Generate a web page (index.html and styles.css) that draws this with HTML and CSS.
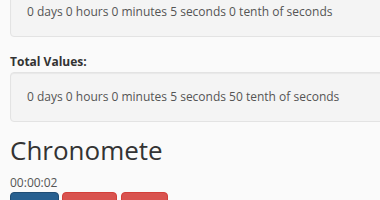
FILE: index.html
```html
<html>
<head>
<link rel="stylesheet" href="styles.css">
</head>
<body>
<div class="page">
<div class="well">0 days 0 hours 0 minutes 5 seconds 0 tenth of seconds</div>
<label class="label">Total Values:</label>
<div class="well">0 days 0 hours 0 minutes 5 seconds 50 tenth of seconds</div>
<h3 class="title">Chronomete</h3>
<div class="time">00:00:02</div>
<div class="buttons">
<button class="btn btn-start" title="Start"></button>
<button class="btn btn-stop" title="Stop"></button>
<button class="btn btn-reset" title="Reset"></button>
</div>
</div>
</body>
</html>
```

FILE: styles.css
```css
body {
  margin: 0;
  background-color: #fafafa;
  font-family: "Open Sans", Arial, sans-serif;
  font-size: 12px;
  color: #333;
  overflow: hidden;
}

.page {
  width: 420px;
  margin-top: -13px;
  padding-left: 10px;
}

.well {
  box-sizing: border-box;
  height: 50px;
  padding: 15px 16px;
  line-height: 18px;
  background-color: #f4f4f4;
  border: 1px solid #e3e3e3;
  border-radius: 4px;
  box-shadow: inset 0 1px 1px rgba(0, 0, 0, 0.05);
  color: #555;
}

.label {
  display: block;
  margin-top: 16px;
  margin-bottom: 2px;
  font-size: 12px;
  line-height: 17px;
  font-weight: bold;
  color: #333;
}

.title {
  margin: 15px 0 0 0;
  font-size: 26px;
  line-height: 27px;
  font-weight: normal;
  color: #333;
}

.time {
  margin-top: 10px;
  font-size: 12px;
  line-height: 17px;
  color: #555;
}

.buttons {
  display: flex;
  gap: 3px;
  margin-top: 1px;
}

.btn {
  height: 30px;
  border-radius: 4px;
  border: 1px solid;
}

.btn-start {
  width: 49px;
  background-color: #286090;
  border-color: #204d74;
}

.btn-stop {
  width: 55px;
  background-color: #d9534f;
  border-color: #d43f3a;
}

.btn-reset {
  width: 47px;
  margin-left: 1px;
  background-color: #d9534f;
  border-color: #d43f3a;
}
```
